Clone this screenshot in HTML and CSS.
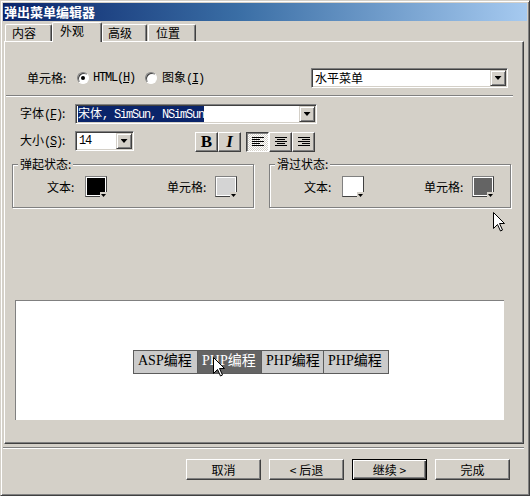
FILE: index.html
```html
<!DOCTYPE html>
<html lang="zh-CN">
<head>
  <meta charset="UTF-8" />
  <title>弹出菜单编辑器</title>
  <link rel="stylesheet" href="styles.css">
</head>
<body>

<div class="window">
  <div class="titlebar">弹出菜单编辑器</div>

  <!-- abas -->
  <div class="tabs">
    <div class="tab t1">内容</div>
    <div class="tab t2 active">外观</div>
    <div class="tab t3">高级</div>
    <div class="tab t4">位置</div>
  </div>

  <div class="panel">
    <div class="row row-cell">
      <div class="radios">
        <span class="lbl-cell">单元格:</span>
        <span class="radio checked"></span>
        <span class="mono">HTML(<u>H</u>)</span>
        <span class="radio second"></span>
        <span>图象<span class="mono">(<u>I</u>)</span></span>
      </div>
      <div class="combo combo-menu">
        <span class="combo-text">水平菜单</span>
        <span class="drop"></span>
      </div>
    </div>

    <div class="sep"></div>

    <div class="row row-font">
      <span class="lbl">字体<span class="mono">(<u>F</u>)</span>:</span>
      <div class="combo combo-font">
        <span class="combo-text sel">宋体<span class="mono">, SimSun, NSimSun</span></span>
        <span class="drop"></span>
      </div>
    </div>

    <div class="row row-size">
      <span class="lbl">大小<span class="mono">(<u>S</u>)</span>:</span>
      <div class="combo combo-size">
        <span class="combo-text mono">14</span>
        <span class="drop"></span>
      </div>
      <div class="tools">
        <span class="btn-tool bold">B</span>
        <span class="btn-tool italic">I</span>
      </div>
      <div class="tools align">
        <span class="btn-tool pressed">
          <svg width="12" height="10" viewBox="0 0 12 10"><path d="M0 0.5h12M0 2.5h8M0 4.5h12M0 6.5h8M0 8.5h12" stroke="#000"/></svg>
        </span>
        <span class="btn-tool">
          <svg width="12" height="10" viewBox="0 0 12 10"><path d="M0 0.5h12M2 2.5h8M0 4.5h12M2 6.5h8M0 8.5h12" stroke="#000"/></svg>
        </span>
        <span class="btn-tool">
          <svg width="12" height="10" viewBox="0 0 12 10"><path d="M0 0.5h12M4 2.5h8M0 4.5h12M4 6.5h8M0 8.5h12" stroke="#000"/></svg>
        </span>
      </div>
    </div>

    <div class="groups">
      <div class="group">
        <span class="legend">弹起状态:</span>
        <div class="pair">
          <span class="lbl-text">文本:</span>
          <span class="swatch" style="background:#000"></span>
        </div>
        <div class="pair">
          <span class="lbl-cellc">单元格:</span>
          <span class="swatch" style="background:#d4d4d4"></span>
        </div>
      </div>
      <div class="group">
        <span class="legend">滑过状态:</span>
        <div class="pair">
          <span class="lbl-text">文本:</span>
          <span class="swatch" style="background:#fff"></span>
        </div>
        <div class="pair">
          <span class="lbl-cellc">单元格:</span>
          <span class="swatch" style="background:#646464"></span>
        </div>
      </div>
    </div>

    <!-- pré-visualização -->
    <div class="preview">
      <div class="menubar">
        <span class="item w1">ASP编程</span>
        <span class="item w2 hover">PHP编程</span>
        <span class="item w3">PHP编程</span>
        <span class="item w4">PHP编程</span>
      </div>
    </div>
  </div>

  <div class="sep sep-bottom"></div>

  <div class="buttons">
    <span class="btn">取消</span>
    <span class="btn">&lt; 后退</span>
    <span class="btn default">继续 &gt;</span>
    <span class="btn">完成</span>
  </div>

  <svg class="cursor c-right" width="12" height="20" viewBox="0 0 12 20"><path d="M0.5 0.5V16.5L4.5 12.5L7.5 19L9.5 18L6.5 11.5H11.5Z" fill="#fff" stroke="#000"/></svg>
  <svg class="cursor c-menu" width="12" height="20" viewBox="0 0 12 20"><path d="M0.5 0.5V16.5L4.5 12.5L7.5 19L9.5 18L6.5 11.5H11.5Z" fill="#fff" stroke="#000"/></svg>
</div>

</body>
</html>
```

FILE: styles.css
```css
* {
  margin: 0;
  padding: 0;
  box-sizing: border-box;
}

body {
  width: 530px;
  height: 496px;
  background: #d4d0c8;
  font-family: "Noto Sans CJK SC", sans-serif;
  font-size: 12px;
  line-height: 14px;
  color: #000;
  overflow: hidden;
}

.mono {
  font-family: "Liberation Mono", "Noto Sans CJK SC", monospace;
  letter-spacing: -1.2px;
}

.window {
  width: 530px;
  height: 496px;
  border: 1px solid;
  border-color: #d4d0c8 #404040 #404040 #d4d0c8;
  box-shadow: inset 1px 1px #fff, inset -1px -1px #808080;
  padding: 2px;
  display: flex;
  flex-direction: column;
  position: relative;
}

.titlebar {
  height: 18px;
  margin-bottom: 1px;
  padding-left: 1px;
  background: linear-gradient(to right, #0a246a, #3a6ea5 45%, #a6caf0);
  color: #fff;
  font-size: 13px;
  font-weight: bold;
  line-height: 18px;
}

/* abas */
.tabs {
  height: 19px;
  display: flex;
  align-items: flex-end;
  padding-left: 2px;
}

.tab {
  height: 17px;
  padding-left: 6px;
  border-top: 1px solid #fff;
  border-left: 1px solid #fff;
  border-right: 1px solid #404040;
  box-shadow: inset -1px 0 #808080;
  border-radius: 2px 2px 0 0;
  line-height: 15px;
}

.t1 { width: 47px; }
.t2 { width: 50px; padding-left: 7px; }
.t3 { width: 45px; margin-right: 1px; padding-left: 5px; }
.t4 { width: 48px; padding-left: 7px; }

.tab.active {
  height: 20px;
  margin-bottom: -1px;
  position: relative;
  z-index: 2;
  background: #d4d0c8;
  line-height: 16px;
}

.panel {
  width: 520px;
  height: 403px;
  margin-left: 1px;
  border: 1px solid;
  border-color: #fff #404040 #404040 #fff;
  box-shadow: inset -1px -1px #808080;
}

.row {
  display: flex;
  align-items: center;
  height: 20px;
}

.row-cell {
  margin-top: 26px;
  justify-content: space-between;
  padding: 0 15px 0 22px;
}

.radios {
  display: flex;
  align-items: center;
}

.lbl-cell {
  width: 50px;
}

.radio {
  width: 12px;
  height: 12px;
  margin-right: 4px;
  border-radius: 50%;
  border: 1px solid;
  border-color: #808080 #fff #fff #808080;
  box-shadow: inset 1px 1px #404040;
  background: #fff;
  display: flex;
  align-items: center;
  justify-content: center;
}

.radio.checked::after {
  content: "";
  width: 4px;
  height: 4px;
  border-radius: 50%;
  background: #000;
}

.radio.second {
  margin-left: 10px;
  margin-right: 5px;
}

/* caixas de seleção */
.combo {
  height: 20px;
  display: flex;
  align-items: center;
  background: #fff;
  border: 1px solid;
  border-color: #808080 #fff #fff #808080;
  box-shadow: inset 1px 1px #404040, inset -1px -1px #d4d0c8;
  padding: 1px;
}

.combo-text {
  padding-left: 2px;
  white-space: nowrap;
}

.combo-text.sel {
  padding-left: 0;
  margin-left: 1px;
  background: #0a246a;
  color: #fff;
}

.drop {
  margin-left: auto;
  width: 16px;
  height: 16px;
  background: #d4d0c8;
  border: 1px solid;
  border-color: #d4d0c8 #404040 #404040 #d4d0c8;
  box-shadow: inset 1px 1px #fff, inset -1px -1px #808080;
  display: flex;
  align-items: center;
  justify-content: center;
}

.drop::after {
  content: "";
  width: 7px;
  height: 4px;
  background: #000;
  clip-path: polygon(0 0, 100% 0, 50% 100%);
}

.combo-menu { width: 197px; }
.combo-font { width: 242px; }
.combo-size { width: 59px; }

.sep {
  margin: 7px 0 0 1px;
  width: 507px;
  height: 2px;
  border-top: 1px solid #808080;
  border-bottom: 1px solid #fff;
}

.row-font {
  margin-top: 7px;
  padding-left: 15px;
}

.lbl {
  width: 55px;
}

.row-size {
  margin-top: 7px;
  padding-left: 15px;
}

.tools {
  display: flex;
  margin-left: 61px;
  margin-top: 2px;
}

.tools.align {
  margin-left: 5px;
}

.btn-tool {
  width: 23px;
  height: 20px;
  background: #d4d0c8;
  border: 1px solid;
  border-color: #fff #404040 #404040 #fff;
  box-shadow: inset -1px -1px #808080;
  display: flex;
  align-items: center;
  justify-content: center;
  font-family: "Liberation Serif", serif;
  font-size: 17px;
}

.btn-tool.bold { font-weight: bold; }
.btn-tool.italic { font-style: italic; font-weight: bold; }

.btn-tool.pressed {
  border-color: #404040 #fff #fff #404040;
  box-shadow: inset 1px 1px #808080;
  background: repeating-conic-gradient(#fff 0 25%, #d4d0c8 0 50%) 0 0 / 2px 2px;
}

/* grupos de estado */
.groups {
  margin-top: 13px;
  padding-left: 7px;
  display: flex;
  gap: 15px;
}

.group {
  width: 242px;
  height: 44px;
  position: relative;
  border: 1px solid #808080;
  box-shadow: 1px 1px #fff, inset 1px 1px #fff;
  display: flex;
  align-items: flex-start;
  justify-content: space-between;
  padding: 11px 16px 0 34px;
}

.legend {
  position: absolute;
  top: -8px;
  left: 5px;
  padding: 0 2px;
  background: #d4d0c8;
}

.pair {
  display: flex;
  align-items: center;
  height: 21px;
}

.lbl-text { width: 38px; }
.lbl-cellc { width: 48px; }

.swatch {
  width: 22px;
  height: 21px;
  position: relative;
  border: 1px solid;
  border-color: #808080 #404040 #404040 #808080;
  box-shadow: inset 1px 1px #fff, inset -1px -1px #fff;
}

.swatch::after {
  content: "";
  position: absolute;
  right: -1px;
  bottom: -1px;
  width: 7px;
  height: 5px;
  background: #d4d0c8;
}

.swatch::before {
  content: "";
  position: absolute;
  right: 0;
  bottom: -1px;
  width: 5px;
  height: 3px;
  background: #000;
  clip-path: polygon(0 0, 100% 0, 50% 100%);
  z-index: 1;
}

/* pré-visualização */
.preview {
  margin: 92px 0 0 10px;
  width: 489px;
  height: 120px;
  background: #fff;
  border-top: 1px solid #808080;
  border-left: 1px solid #808080;
  display: flex;
  align-items: center;
  justify-content: center;
}

.menubar {
  display: flex;
  border: 1px solid #5c5c5c;
  margin-left: 2px;
  margin-top: 2px;
}

.item {
  height: 22px;
  padding-left: 4px;
  background: #cbcbcb;
  border-left: 1px solid #5c5c5c;
  font-family: "Liberation Serif", "Noto Sans CJK SC", serif;
  font-size: 14px;
  line-height: 20px;
  white-space: nowrap;
}

.item.w1 { width: 63px; border-left: none; }
.item.w2 { width: 64px; }
.item.w3 { width: 62px; }
.item.w4 { width: 65px; }

.item.hover {
  background: #646464;
  color: #fff;
}

.sep-bottom {
  margin: 3px 0 0 0;
  width: 521px;
}

.buttons {
  margin-top: 10px;
  display: flex;
  justify-content: flex-end;
  gap: 8px;
  padding-right: 17px;
}

.btn {
  width: 75px;
  height: 21px;
  border: 1px solid;
  border-color: #fff #404040 #404040 #fff;
  box-shadow: inset -1px -1px #808080;
  display: flex;
  align-items: center;
  justify-content: center;
}

.btn.default {
  border-color: #000;
  box-shadow: inset 1px 1px #fff, inset -1px -1px #404040, inset -2px -2px #808080;
}

.cursor {
  position: absolute;
  z-index: 5;
}

.c-right { left: 492px; top: 211px; }
.c-menu { left: 212px; top: 356px; }
```
